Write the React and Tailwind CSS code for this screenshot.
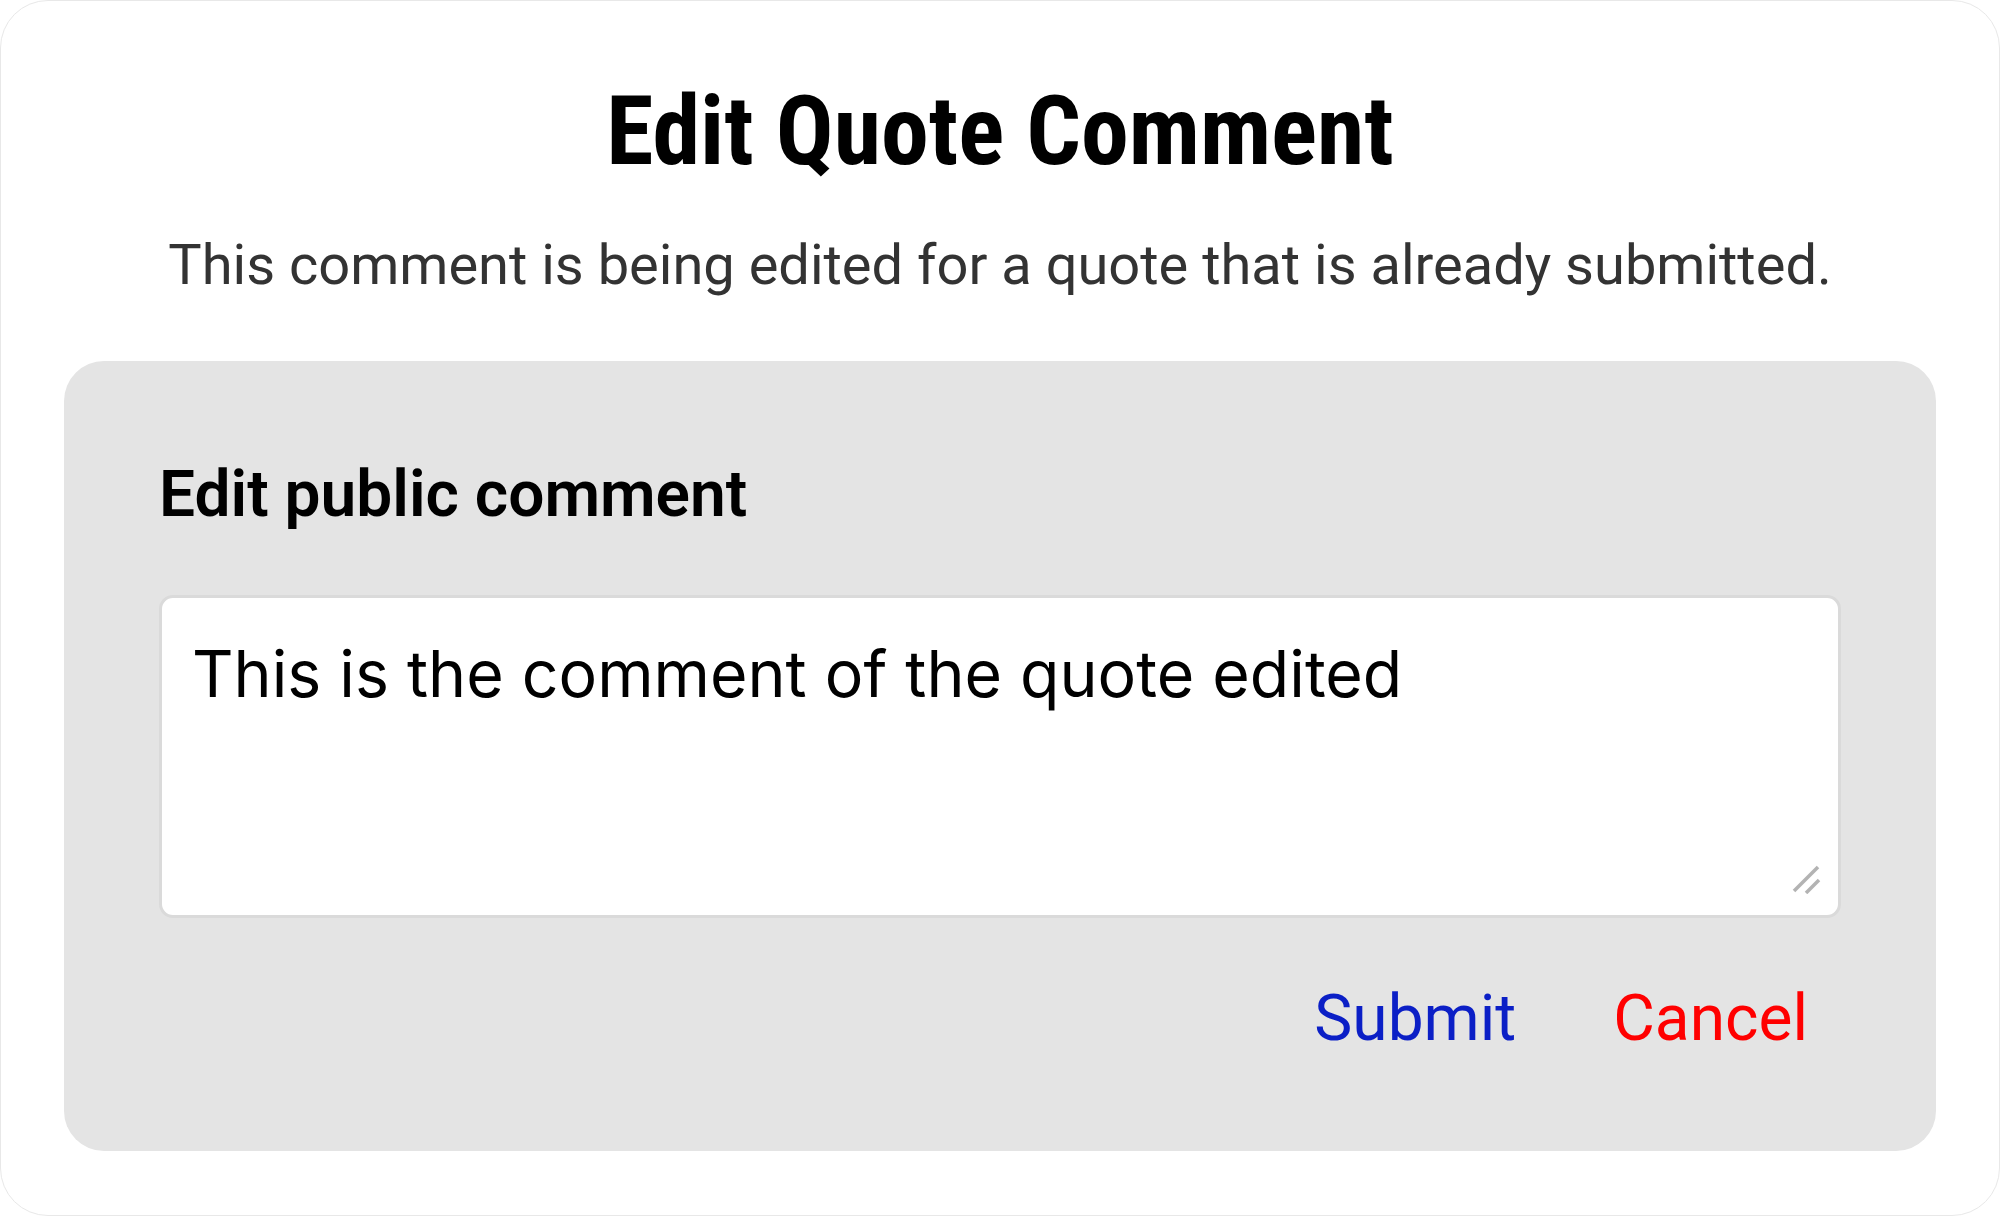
import React from "react";

export default function App() {
  return (
    <div className="w-[2000px] h-[1216px] bg-white">
      <div className="w-full h-full bg-white rounded-[48px] border border-[#e8e8e8] flex flex-col items-center font-['Roboto',sans-serif]">
        <h1 className="mt-[82px] text-[96px] leading-none font-bold text-black font-['Roboto_Condensed','Roboto',sans-serif]">
          Edit Quote Comment
        </h1>
        <p className="mt-[58px] text-[56px] leading-none text-[#333333]">
          This comment is being edited for a quote that is already submitted.
        </p>
        <div className="mt-[68px] w-[1872px] h-[790px] bg-[#e4e4e4] rounded-[40px] px-[95px] pt-[102px] flex flex-col">
          <label className="text-[64px] leading-none font-semibold text-black">
            Edit public comment
          </label>
          <div className="relative mt-[68px]">
            <textarea
              className="block w-full h-[323px] bg-white border-[3px] border-[#dadada] rounded-[14px] pl-[30px] pt-[38px] pr-[32px] text-[64.4px] leading-[1.2] text-black resize-none outline-none font-['Inter',sans-serif]"
              defaultValue="This is the comment of the quote edited"
            />
            <svg
              className="absolute right-[20px] bottom-[24px] w-[30px] h-[30px]"
              viewBox="0 0 30 30"
            >
              <line x1="3" y1="27" x2="27" y2="3" stroke="#b3b3b3" strokeWidth="3.5" />
              <line x1="15" y1="29" x2="28" y2="16" stroke="#b3b3b3" strokeWidth="3.5" />
            </svg>
          </div>
          <div className="mt-[69px] flex justify-end gap-[97px] pr-[33px]">
            <button className="text-[64px] leading-none text-[#0b1fc6]">Submit</button>
            <button className="text-[64px] leading-none text-[#ff0000]">Cancel</button>
          </div>
        </div>
      </div>
    </div>
  );
}
